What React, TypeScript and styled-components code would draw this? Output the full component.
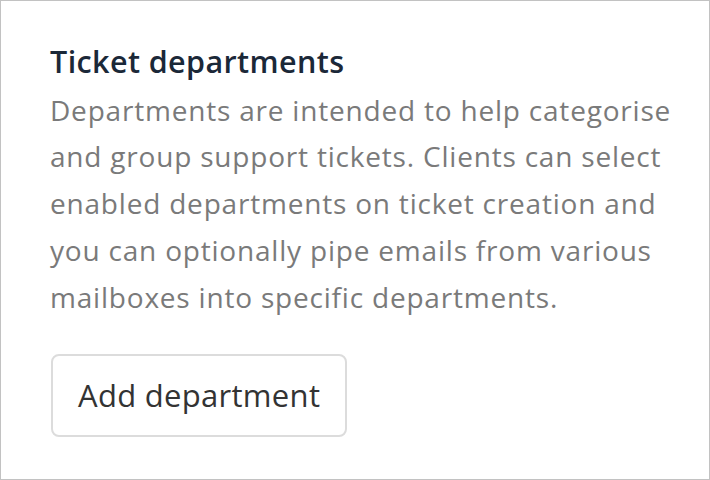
import React from 'react';
import styled, {createGlobalStyle} from 'styled-components';

const GlobalStyle = createGlobalStyle`
  html, body {
    margin: 0;
    padding: 0;
    background: #ffffff;
  }
  * {
    box-sizing: border-box;
  }
`;

const Frame = styled.div`
  width: 710px;
  height: 480px;
  border: 1px solid #c2c2c2;
  background: #fff;
  padding: 40px 20px 0 49px;
  font-family: "Open Sans", "Noto Sans", sans-serif;
`;

const Title = styled.h3`
  margin: 0;
  font-size: 30.5px;
  font-weight: 600;
  line-height: 40px;
  letter-spacing: 0.4px;
  color: #1b2838;
`;

const Description = styled.p`
  margin: 5.5px 0 0;
  font-size: 28px;
  line-height: 46.75px;
  letter-spacing: 0.8px;
  color: #7a7a7a;
  white-space: nowrap;
`;

const Button = styled.button`
  display: block;
  margin-top: 33.5px;
  margin-left: 1px;
  height: 83px;
  padding: 0 25px;
  font-family: inherit;
  font-size: 31px;
  letter-spacing: 0.3px;
  color: #333;
  background: #fff;
  border: 2px solid #dcdcdc;
  border-radius: 8px;
  cursor: pointer;
`;

const lines = [
  'Departments are intended to help categorise',
  'and group support tickets. Clients can select',
  'enabled departments on ticket creation and',
  'you can optionally pipe emails from various',
  'mailboxes into specific departments.',
];

export default function App() {
  return (
    <>
      <GlobalStyle/>
      <Frame>
        <Title>Ticket departments</Title>
        <Description>
          {lines.map((line, i) => (
            <React.Fragment key={i}>
              {line}
              {i < lines.length - 1 && <br/>}
            </React.Fragment>
          ))}
        </Description>
        <Button>Add department</Button>
      </Frame>
    </>
  );
}
